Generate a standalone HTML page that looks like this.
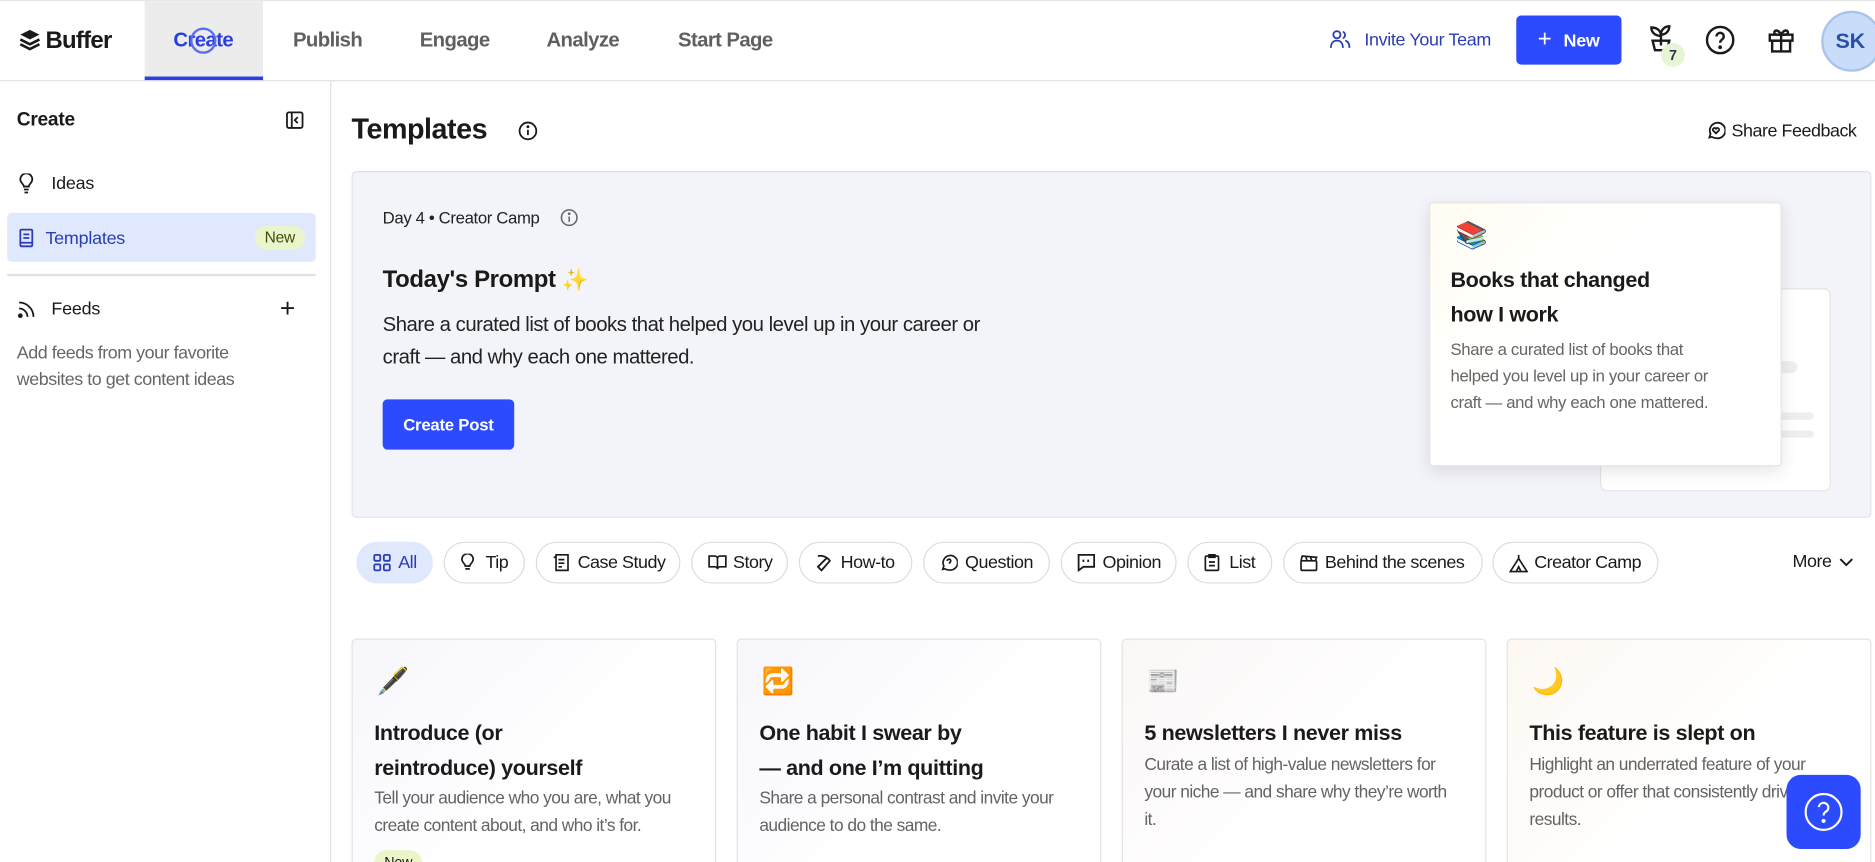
<!DOCTYPE html>
<html><head><meta charset="utf-8"><style>
*{box-sizing:border-box;margin:0;padding:0}
html,body{width:1875px;height:862px;overflow:hidden;background:#fff}
#w{width:1568px;height:721px;transform:scale(1.19579);transform-origin:0 0;position:relative;font-family:"Liberation Sans",sans-serif;color:#1a1a1a;letter-spacing:-0.2px}
.a{position:absolute}
.tab{position:absolute;top:0;height:67px;line-height:67px;font-size:17px;font-weight:700;color:#5f5f5f;letter-spacing:-0.5px}
.chip{position:absolute;top:453px;height:35px;border:1px solid #dcdcdc;border-radius:18px;font-size:15px;line-height:33px;padding-left:34px;color:#1a1a1a;background:#fff;letter-spacing:-0.4px}
.chip svg{position:absolute;left:13px;top:9px}
.card{position:absolute;top:534px;height:200px;border:1px solid #e3e3e3;border-radius:4px;background:linear-gradient(135deg,#f7f7fc,#fff 60%)}
.card .e{position:absolute;left:20px;top:22px;font-size:22px}
.card h3{position:absolute;left:18px;top:64px;font-size:18px;line-height:29px;font-weight:700;width:275px;letter-spacing:-0.3px}
.card p{position:absolute;left:18px;font-size:14.5px;line-height:23px;color:#636363;width:265px;letter-spacing:-0.45px}
</style></head><body><div id="w">
<div class="a" style="left:0;top:0;width:1568px;height:68px;border-bottom:1px solid #e2e2e2;border-top:1px solid #e8e8e8"></div>
<svg class="a" style="left:16px;top:24px" width="18" height="20" viewBox="0 0 18 20"><path d="M9 1L17 5L9 9L1 5Z" fill="#1a1a1a"/><path d="M1 9L9 13L17 9M1 13L9 17L17 13" stroke="#1a1a1a" stroke-width="2.2" fill="none"/></svg>
<div class="a" style="left:38px;top:23px;font-size:20px;font-weight:700;letter-spacing:-0.6px">Buffer</div>
<div class="a" style="left:121px;top:1px;width:99px;height:66px;background:#ececec;border-bottom:3px solid #2a3fe0"></div>
<div class="tab" style="left:145px;color:#2a3fe0">Create</div>
<div class="a" style="left:159px;top:23px;width:22px;height:22px;border:2px solid #5c6ef0;border-radius:50%"></div>
<div class="tab" style="left:245px">Publish</div>
<div class="tab" style="left:351px">Engage</div>
<div class="tab" style="left:457px">Analyze</div>
<div class="tab" style="left:567px">Start Page</div>
<svg class="a" style="left:1112px;top:25px" width="18" height="16" viewBox="0 0 18 16" fill="none" stroke="#2b3db3" stroke-width="1.5"><circle cx="6" cy="4" r="3"/><path d="M1 15c0-4 2-6 5-6s5 2 5 6"/><path d="M11 1.5a3 3 0 010 5.5M13 9c2 .5 3.5 2.5 3.5 6"/></svg>
<div class="a" style="left:1141px;top:25px;font-size:15px;color:#2b3db3;letter-spacing:-0.3px">Invite Your Team</div>
<div class="a" style="left:1268px;top:13px;width:88px;height:41px;background:#2c4bff;border-radius:4px;color:#fff;font-size:15px;font-weight:700;line-height:41px;padding-left:18px"><span style="font-weight:400;font-size:20px;margin-right:10px">+</span>New</div>
<svg class="a" style="left:1378px;top:20px" width="22" height="26" viewBox="0 0 22 26" fill="none" stroke="#1a1a1a" stroke-width="2"><path d="M11 18V9M11 10C11 5 7 3 3 3c0 4 3 7 8 7zM11 9c0-4 3-7 7-7 0 4-3 7-7 7"/><path d="M4 14h14l-2 8H6z"/></svg>
<div class="a" style="left:1389px;top:36px;width:20px;height:20px;border-radius:50%;background:#e6f5d3;font-size:12px;font-weight:700;text-align:center;line-height:20px;color:#335">7</div>
<svg class="a" style="left:1426px;top:21px" width="25" height="25" viewBox="0 0 25 25" fill="none" stroke="#1a1a1a" stroke-width="2"><circle cx="12.5" cy="12.5" r="11"/><path d="M9.5 9.5a3 3 0 115 2.2c-1.3.9-2 1.5-2 3"/><circle cx="12.5" cy="18.5" r=".6" fill="#1a1a1a"/></svg>
<svg class="a" style="left:1478px;top:22px" width="23" height="23" viewBox="0 0 23 23" fill="none" stroke="#1a1a1a" stroke-width="2"><rect x="2" y="7" width="19" height="5"/><rect x="4" y="12" width="15" height="9"/><path d="M11.5 7v14M11.5 7C9 2 5 3 6 6c.5 1 3 1 5.5 1zM11.5 7C14 2 18 3 17 6c-.5 1-3 1-5.5 1z"/></svg>
<div class="a" style="left:1523px;top:9px;width:51px;height:51px;border-radius:50%;background:#c9ddfa;border:2px solid #a9c4ec;color:#2b4ea8;font-weight:700;font-size:18px;line-height:47px;padding-left:10px">SK</div>
<div class="a" style="left:276px;top:68px;width:1px;height:653px;background:#e2e2e2"></div>
<div class="a" style="left:14px;top:92px;font-size:16px;font-weight:700">Create</div>
<svg class="a" style="left:239px;top:93px" width="15" height="15" viewBox="0 0 15 15" fill="none" stroke="#1a1a1a" stroke-width="1.5"><rect x="1" y="1" width="13" height="13" rx="1.5"/><path d="M5 1v13M10 5l-2.5 2.5L10 10"/></svg>
<svg class="a" style="left:16px;top:145px" width="12" height="17" viewBox="0 0 12 17" fill="none" stroke="#1a1a1a" stroke-width="1.5"><path d="M4 11c0-2-3-3-3-6a5 5 0 0110 0c0 3-3 4-3 6zM4 13.5h4M4.5 16h3"/></svg>
<div class="a" style="left:43px;top:145px;font-size:15px">Ideas</div>
<div class="a" style="left:6px;top:178px;width:258px;height:41px;background:#e0e8fd;border-radius:4px"></div>
<svg class="a" style="left:16px;top:191px" width="12" height="16" viewBox="0 0 12 16" fill="none" stroke="#2b3db3" stroke-width="1.5"><rect x="1" y="1" width="10" height="14" rx="1"/><path d="M3.5 5h5M3.5 8h5M1 12h10"/></svg>
<div class="a" style="left:38px;top:191px;font-size:15px;color:#2b3db3">Templates</div>
<div class="a" style="left:213px;top:189px;width:42px;height:20px;border-radius:10px;background:#eaf6c9;font-size:13px;text-align:center;line-height:20px;color:#3d4d12">New</div>
<div class="a" style="left:6px;top:229px;width:258px;height:2px;background:#e2e2e2"></div>
<svg class="a" style="left:15px;top:252px" width="14" height="14" viewBox="0 0 14 14" fill="none" stroke="#1a1a1a" stroke-width="1.5"><path d="M1 1a12 12 0 0112 12M1 6a7 7 0 017 7"/><circle cx="2" cy="12" r="1.2" fill="#1a1a1a"/></svg>
<div class="a" style="left:43px;top:250px;font-size:15px">Feeds</div>
<div class="a" style="left:234px;top:245px;font-size:22px;font-weight:300">+</div>
<div class="a" style="left:14px;top:285px;font-size:15px;line-height:22px;color:#666;width:250px;letter-spacing:-0.4px">Add feeds from your favorite<br>websites to get content ideas</div>
<div class="a" style="left:294px;top:95px;font-size:24px;font-weight:700;letter-spacing:-0.4px">Templates</div>
<svg class="a" style="left:433px;top:101px" width="17" height="17" viewBox="0 0 17 17" fill="none" stroke="#1a1a1a" stroke-width="1.5"><circle cx="8.5" cy="8.5" r="7"/><path d="M8.5 7.5v4.5"/><circle cx="8.5" cy="5" r=".5" fill="#1a1a1a"/></svg>
<svg class="a" style="left:1427px;top:101px" width="16" height="16" viewBox="0 0 16 16" fill="none" stroke="#1a1a1a" stroke-width="1.5"><path d="M2.5 14l1-3A6.5 6.5 0 118 14.5 6.5 6.5 0 014.5 13.5z"/><path d="M8 10.5L5.6 8.2a1.4 1.4 0 012.4-1.5 1.4 1.4 0 012.4 1.5z"/></svg>
<div class="a" style="left:1448px;top:101px;font-size:15px;letter-spacing:-0.4px">Share Feedback</div>
<div class="a" style="left:294px;top:143px;width:1271px;height:290px;background:#f3f4f9;border:1px solid #e2e3ea;border-radius:4px;overflow:hidden">
<div class="a" style="left:25px;top:30px;font-size:14px;color:#222;letter-spacing:-0.3px">Day 4 • Creator Camp</div>
<svg class="a" style="left:173px;top:30px" width="16" height="16" viewBox="0 0 16 16" fill="none" stroke="#666" stroke-width="1.3"><circle cx="8" cy="8" r="6.5"/><path d="M8 7v4.5"/><circle cx="8" cy="4.8" r=".5" fill="#666"/></svg>
<div class="a" style="left:25px;top:79px;font-size:20px;font-weight:700;letter-spacing:-0.3px">Today's Prompt <span style="font-size:18px">✨</span></div>
<div class="a" style="left:25px;top:114px;font-size:17px;line-height:27px;width:530px;color:#222;letter-spacing:-0.4px">Share a curated list of books that helped you level up in your career or craft — and why each one mattered.</div>
<div class="a" style="left:25px;top:190px;width:110px;height:42px;background:#2c4bff;border-radius:4px;color:#fff;font-size:14px;font-weight:700;text-align:center;line-height:42px">Create Post</div>
<div class="a" style="left:1043px;top:97px;width:193px;height:170px;background:#fff;border:1px solid #e4e4e4;border-radius:6px">
<div class="a" style="left:128px;top:60px;width:36px;height:10px;background:#eee;border-radius:5px"></div>
<div class="a" style="left:140px;top:103px;width:38px;height:6px;background:#eee;border-radius:3px"></div>
<div class="a" style="left:140px;top:118px;width:38px;height:6px;background:#eee;border-radius:3px"></div>
</div>
<div class="a" style="left:900px;top:25px;width:295px;height:221px;background:linear-gradient(135deg,#fffcf2,#fff 40%);border:1px solid #e4e4e4;border-radius:3px;box-shadow:0 4px 14px rgba(0,0,0,.1)">
<div class="a" style="left:21px;top:14px;font-size:22px">📚</div>
<div class="a" style="left:17px;top:50px;font-size:18px;line-height:29px;font-weight:700;letter-spacing:-0.3px">Books that changed<br>how I work</div>
<div class="a" style="left:17px;top:111px;font-size:14px;line-height:22px;color:#666;width:245px;letter-spacing:-0.3px">Share a curated list of books that<br>helped you level up in your career or<br>craft — and why each one mattered.</div>
</div>
</div>
<div class="chip" style="left:298px;width:64px;background:#e0e8fd;border-color:#e0e8fd;color:#2b3db3"><svg width="15" height="15" viewBox="0 0 15 15" fill="none" stroke="#2b3db3" stroke-width="1.5"><rect x="1" y="1" width="5" height="5" rx="1"/><rect x="9" y="1" width="5" height="5" rx="1"/><rect x="1" y="9" width="5" height="5" rx="1"/><rect x="9" y="9" width="5" height="5" rx="1"/></svg>All</div>
<div class="chip" style="left:371px;width:68px"><svg width="12" height="16" viewBox="0 0 12 17" fill="none" stroke="#1a1a1a" stroke-width="1.5"><path d="M4 11c0-2-3-3-3-6a5 5 0 0110 0c0 3-3 4-3 6zM4 13.5h4"/></svg>Tip</div>
<div class="chip" style="left:448px;width:121px"><svg width="15" height="15" viewBox="0 0 15 15" fill="none" stroke="#1a1a1a" stroke-width="1.4"><path d="M3 1h10v13H3zM1 3h2M5 5h5M5 8h5M5 11h3"/></svg>Case Study</div>
<div class="chip" style="left:578px;width:81px"><svg width="16" height="14" viewBox="0 0 16 14" fill="none" stroke="#1a1a1a" stroke-width="1.4"><path d="M1 2h5c1 0 2 1 2 2v9c0-1-1-2-2-2H1zM15 2h-5c-1 0-2 1-2 2v9c0-1 1-2 2-2h5z"/></svg>Story</div>
<div class="chip" style="left:668px;width:95px"><svg width="15" height="15" viewBox="0 0 15 15" fill="none" stroke="#1a1a1a" stroke-width="1.5"><path d="M2 2c4-1 8 1 10 4L5 14 2 11l7-7"/></svg>How-to</div>
<div class="chip" style="left:772px;width:106px"><svg width="15" height="15" viewBox="0 0 16 16" fill="none" stroke="#1a1a1a" stroke-width="1.5"><path d="M2.5 14l1-3A6.5 6.5 0 118 14.5 6.5 6.5 0 014.5 13.5z"/><path d="M6.5 6.5a1.6 1.6 0 113 .8c-.8.5-1 .9-1 1.7"/></svg>Question</div>
<div class="chip" style="left:887px;width:97px"><svg width="15" height="15" viewBox="0 0 15 15" fill="none" stroke="#1a1a1a" stroke-width="1.5"><path d="M1 1h13v10H5l-4 3zM5 5v2M9 5v2"/></svg>Opinion</div>
<div class="chip" style="left:993px;width:71px"><svg width="13" height="15" viewBox="0 0 13 15" fill="none" stroke="#1a1a1a" stroke-width="1.4"><rect x="1" y="2" width="11" height="12" rx="1"/><path d="M4 1h5v2H4zM4 7h5M4 10h5"/></svg>List</div>
<div class="chip" style="left:1073px;width:167px"><svg width="15" height="15" viewBox="0 0 15 15" fill="none" stroke="#1a1a1a" stroke-width="1.4"><rect x="1" y="6" width="13" height="8" rx="1"/><path d="M1 6l1-4 12 1-1 3M5 2.5l1 3.5M9 3l1 3"/></svg>Behind the scenes</div>
<div class="chip" style="left:1248px;width:139px"><svg width="16" height="16" viewBox="0 0 16 16" fill="none" stroke="#1a1a1a" stroke-width="1.4"><path d="M8 1v3M1 15l7-11 7 11zM6 15l2-4 2 4"/></svg>Creator Camp</div>
<div class="a" style="left:1499px;top:461px;font-size:15px;letter-spacing:-0.4px">More</div>
<svg class="a" style="left:1538px;top:466px" width="12" height="8" viewBox="0 0 12 8" fill="none" stroke="#1a1a1a" stroke-width="1.6"><path d="M1 1.5l5 5 5-5"/></svg>
<div class="card" style="left:294px;width:305px"><div class="e">🖋️</div><h3>Introduce (or<br>reintroduce) yourself</h3><p style="top:122px">Tell your audience who you are, what you create content about, and who it’s for.</p><div class="a" style="left:18px;top:176px;width:40px;height:20px;border-radius:10px;background:#eaf6c9;font-size:12px;text-align:center;line-height:20px">New</div></div>
<div class="card" style="left:616px;width:305px"><div class="e">🔁</div><h3>One habit I swear by<br>— and one I’m quitting</h3><p style="top:122px">Share a personal contrast and invite your audience to do the same.</p></div>
<div class="card" style="left:938px;width:305px;background:linear-gradient(135deg,#fbf7f7,#fff 60%)"><div class="e">📰</div><h3>5 newsletters I never miss</h3><p style="top:94px">Curate a list of high-value newsletters for<br>your niche — and share why they’re worth<br>it.</p></div>
<div class="card" style="left:1260px;width:305px;background:linear-gradient(135deg,#fdf8f3,#fff 60%)"><div class="e">🌙</div><h3>This feature is slept on</h3><p style="top:94px">Highlight an underrated feature of your<br>product or offer that consistently drives<br>results.</p></div>
<div class="a" style="left:1494px;top:648px;width:62px;height:62px;background:#2c4bff;border-radius:12px"></div>
<svg class="a" style="left:1507px;top:661px" width="36" height="36" viewBox="0 0 36 36" fill="none" stroke="#fff" stroke-width="1.8"><circle cx="18" cy="18" r="15"/><path d="M14 14a4 4 0 117 3c-2 1.3-3 2-3 4"/><circle cx="18" cy="25.5" r=".8" fill="#fff"/></svg>
</div></body></html>
